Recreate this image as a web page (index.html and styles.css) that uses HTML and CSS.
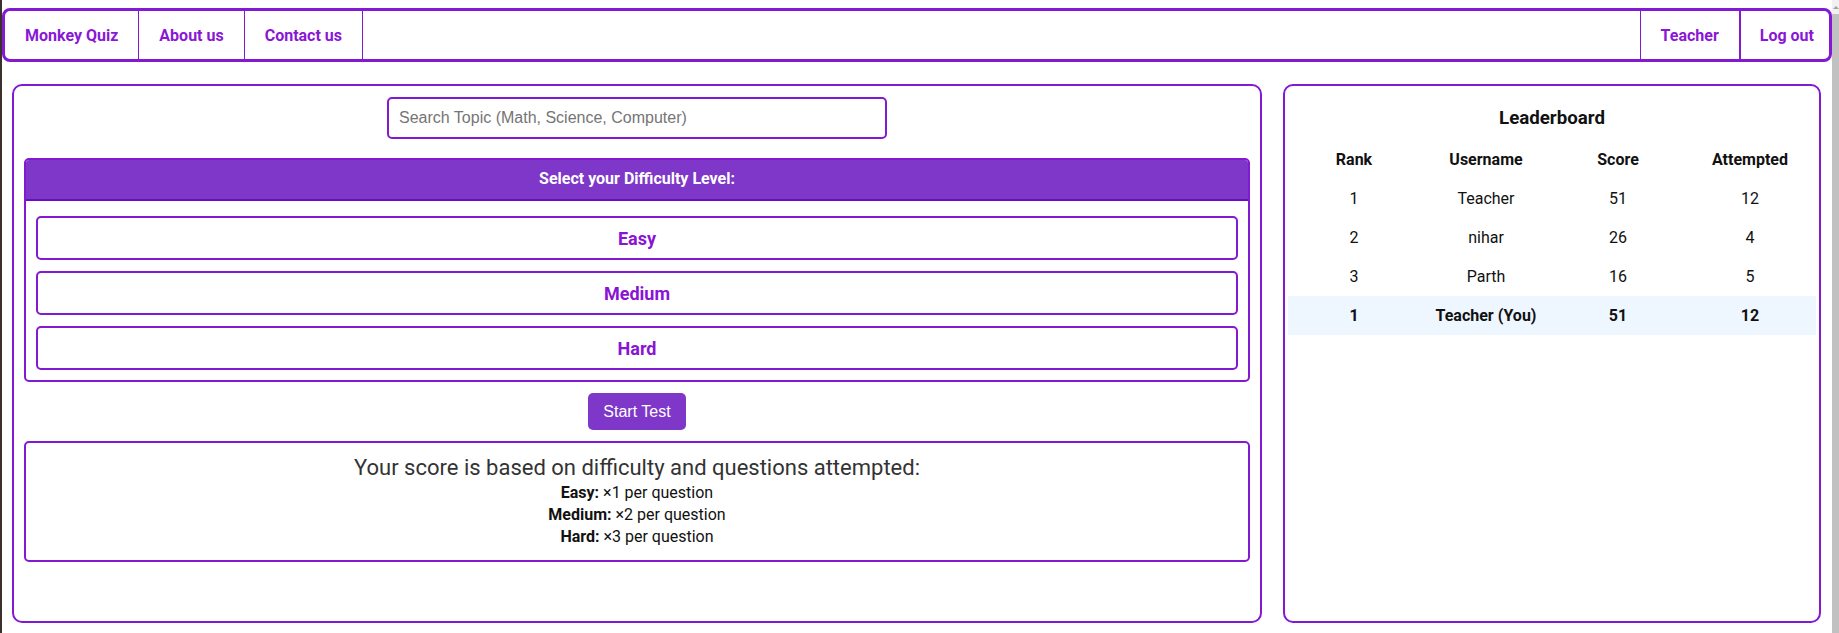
FILE: index.html
```html
<!DOCTYPE html>
<html lang="en">
<head>
<meta charset="utf-8">
<title>Monkey Quiz</title>
<link rel="stylesheet" href="styles.css">
</head>
<body>
<div class="edge"></div>
<div class="page">
  <nav class="navbar">
    <a class="nav-item" href="#">Monkey Quiz</a>
    <a class="nav-item" href="#">About us</a>
    <a class="nav-item" href="#">Contact us</a>
    <div class="nav-spacer"></div>
    <a class="nav-item nav-right" href="#">Teacher</a>
    <a class="nav-item nav-right nav-last" href="#">Log out</a>
  </nav>
  <main class="content">
    <section class="panel quiz-panel">
      <input class="search" type="text" placeholder="Search Topic (Math, Science, Computer)">
      <div class="difficulty">
        <div class="difficulty-head">Select your Difficulty Level:</div>
        <div class="difficulty-list">
          <button class="level">Easy</button>
          <button class="level">Medium</button>
          <button class="level">Hard</button>
        </div>
      </div>
      <div class="start-row"><button class="start">Start Test</button></div>
      <div class="score-info">
        <div class="score-title">Your score is based on difficulty and questions attempted:</div>
        <div class="score-line"><b>Easy:</b> ×1 per question</div>
        <div class="score-line"><b>Medium:</b> ×2 per question</div>
        <div class="score-line"><b>Hard:</b> ×3 per question</div>
      </div>
    </section>
    <aside class="panel board-panel">
      <h3 class="board-title">Leaderboard</h3>
      <table class="board">
        <thead>
          <tr><th>Rank</th><th>Username</th><th>Score</th><th>Attempted</th></tr>
        </thead>
        <tbody>
          <tr><td>1</td><td>Teacher</td><td>51</td><td>12</td></tr>
          <tr><td>2</td><td>nihar</td><td>26</td><td>4</td></tr>
          <tr><td>3</td><td>Parth</td><td>16</td><td>5</td></tr>
          <tr class="me"><td>1</td><td>Teacher (You)</td><td>51</td><td>12</td></tr>
        </tbody>
      </table>
    </aside>
  </main>
</div>
<div class="scrollbar">
  <div class="scroll-arrow"></div>
  <div class="scroll-thumb"></div>
</div>
</body>
</html>
```

FILE: styles.css
```css
html, body {
  margin: 0;
  padding: 0;
}
body {
  display: flex;
  height: 633px;
  overflow: hidden;
  background: #ffffff;
  font-family: Roboto, "Noto Sans", Arial, sans-serif;
  color: #111;
}
.edge {
  width: 2px;
  flex: none;
  background: #3b302a;
}
.page {
  flex: 1;
  min-width: 0;
  padding-top: 8px;
}
.scrollbar {
  width: 7px;
  flex: none;
  display: flex;
  flex-direction: column;
  background: #f1f1f1;
}
.scroll-arrow {
  height: 14px;
  display: flex;
  align-items: center;
  justify-content: center;
}
.scroll-arrow::before {
  content: "";
  width: 0;
  height: 0;
  border-left: 3px solid transparent;
  border-right: 3px solid transparent;
  border-bottom: 3px solid #a3a3a3;
}
.scroll-thumb {
  flex: 1;
  background: #c1c1c1;
}

/* navbar */
.navbar {
  display: flex;
  align-items: stretch;
  height: 54px;
  box-sizing: border-box;
  border: 3px solid #8419d2;
  border-radius: 8px;
}
.nav-item {
  display: flex;
  align-items: center;
  padding: 0 20px;
  color: #8a17d6;
  font-weight: 700;
  font-size: 16px;
  text-decoration: none;
  border-right: 1px solid #8419d2;
}
.nav-spacer {
  flex: 1;
}
.nav-right {
  border-right: none;
  border-left: 1px solid #8419d2;
}
.nav-last {
  border-left-width: 2px;
  padding: 0 15px 0 19px;
}

/* content */
.content {
  display: flex;
  gap: 21px;
  margin-top: 22px;
  padding: 0 11px 0 10px;
}
.panel {
  height: 539px;
  box-sizing: border-box;
  border: 2px solid #8419d2;
  border-radius: 10px;
}
.quiz-panel {
  flex: 1;
  padding: 11px 10px 10px;
  display: flex;
  flex-direction: column;
}
.board-panel {
  width: 538px;
  flex: none;
  padding: 3px;
}

.search {
  align-self: center;
  width: 500px;
  height: 42px;
  box-sizing: border-box;
  border: 2px solid #8419d2;
  border-radius: 5px;
  padding: 0 10px;
  font-family: "Liberation Sans", Arial, sans-serif;
  font-size: 16px;
  color: #333;
  outline: none;
}
.search::placeholder {
  color: #757575;
}

.difficulty {
  margin-top: 19px;
  border: 2px solid #8419d2;
  border-radius: 5px;
  overflow: hidden;
}
.difficulty-head {
  height: 43px;
  box-sizing: border-box;
  margin: -2px -2px 0;
  background: #7e37c8;
  border-bottom: 2px solid #6a0dc2;
  color: #fff;
  font-weight: 700;
  font-size: 16px;
  display: flex;
  align-items: center;
  justify-content: center;
  border-radius: 5px 5px 0 0;
}
.difficulty-list {
  display: flex;
  flex-direction: column;
  gap: 11px;
  padding: 15px 10px 10px;
}
.level {
  height: 44px;
  box-sizing: border-box;
  background: #fff;
  border: 2px solid #8419d2;
  border-radius: 5px;
  font-family: Roboto, "Noto Sans", Arial, sans-serif;
  font-weight: 700;
  font-size: 18px;
  color: #8a14d5;
  cursor: pointer;
}

.start-row {
  display: flex;
  justify-content: center;
  margin-top: 11px;
}
.start {
  height: 37px;
  padding: 0 15px;
  border: none;
  border-radius: 5px;
  background: #7e37c8;
  color: #fff;
  font-family: "Liberation Sans", Arial, sans-serif;
  font-size: 16px;
  cursor: pointer;
}

.score-info {
  margin-top: 11px;
  border: 2px solid #8419d2;
  border-radius: 5px;
  padding: 11px 10px 12px;
  text-align: center;
}
.score-title {
  font-size: 22px;
  line-height: 27px;
  color: #333;
  margin-bottom: 1px;
}
.score-line {
  font-size: 16px;
  line-height: 22px;
  color: #111;
}

.board-title {
  margin: 18px 0 11px;
  text-align: center;
  font-size: 18.7px;
  line-height: 22px;
  font-weight: 700;
  color: #111;
}
.board {
  width: 100%;
  border-collapse: collapse;
  table-layout: fixed;
  font-size: 16px;
}
.board th, .board td {
  text-align: center;
  padding: 10px 0;
  line-height: 19px;
}
.board th {
  font-weight: 700;
}
.board tr.me {
  background: #eef6ff;
  font-weight: 700;
}
```
